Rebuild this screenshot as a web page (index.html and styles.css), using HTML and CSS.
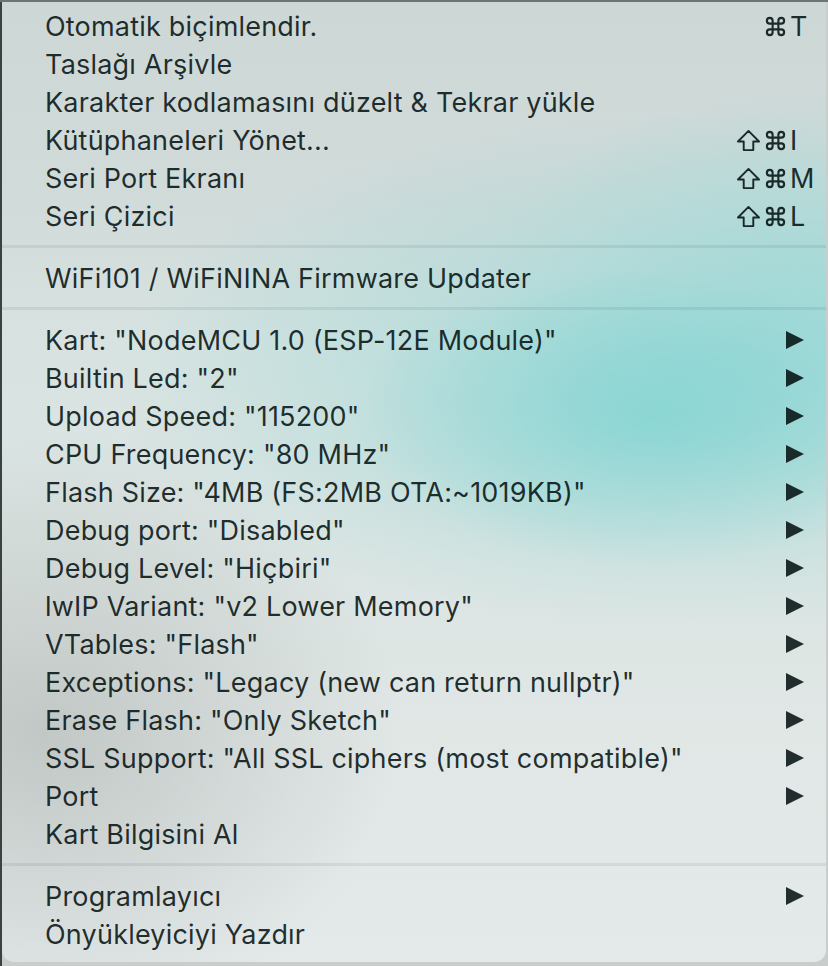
FILE: index.html
```html
<!DOCTYPE html>
<html lang="tr">
<head>
    <meta charset="UTF-8">
    <meta name="viewport" content="width=device-width, initial-scale=1.0">
    <link rel="stylesheet" href="styles.css">
    <title>Araçlar</title>
</head>
<body>
    <svg width="0" height="0" class="defs">
        <symbol id="cmd" viewBox="0 0 24 24">
            <path d="M15 6v12a3 3 0 1 0 3-3H6a3 3 0 1 0 3 3V6a3 3 0 1 0-3 3h12a3 3 0 1 0-3-3"/>
        </symbol>
        <symbol id="shift" viewBox="0 0 26 24">
            <path d="M13 2 L24 13 H18 V22 H8 V13 H2 Z"/>
        </symbol>
    </svg>

    <div class="menu">
        <div class="menu-item">
            <span class="label">Otomatik biçimlendir.</span>
            <span class="shortcut">
                <span class="mods"><svg class="cmd"><use href="#cmd"/></svg></span>
                <span class="key">T</span>
            </span>
        </div>
        <div class="menu-item"><span class="label">Taslağı Arşivle</span></div>
        <div class="menu-item"><span class="label">Karakter kodlamasını düzelt &amp; Tekrar yükle</span></div>
        <div class="menu-item">
            <span class="label">Kütüphaneleri Yönet...</span>
            <span class="shortcut">
                <span class="mods"><svg class="shift"><use href="#shift"/></svg><svg class="cmd"><use href="#cmd"/></svg></span>
                <span class="key">I</span>
            </span>
        </div>
        <div class="menu-item">
            <span class="label">Seri Port Ekranı</span>
            <span class="shortcut">
                <span class="mods"><svg class="shift"><use href="#shift"/></svg><svg class="cmd"><use href="#cmd"/></svg></span>
                <span class="key">M</span>
            </span>
        </div>
        <div class="menu-item">
            <span class="label">Seri Çizici</span>
            <span class="shortcut">
                <span class="mods"><svg class="shift"><use href="#shift"/></svg><svg class="cmd"><use href="#cmd"/></svg></span>
                <span class="key">L</span>
            </span>
        </div>

        <div class="separator"></div>

        <div class="menu-item"><span class="label">WiFi101 / WiFiNINA Firmware Updater</span></div>

        <div class="separator"></div>

        <div class="menu-item"><span class="label">Kart: "NodeMCU 1.0 (ESP-12E Module)"</span><span class="arrow"></span></div>
        <div class="menu-item"><span class="label">Builtin Led: "2"</span><span class="arrow"></span></div>
        <div class="menu-item"><span class="label">Upload Speed: "115200"</span><span class="arrow"></span></div>
        <div class="menu-item"><span class="label">CPU Frequency: "80 MHz"</span><span class="arrow"></span></div>
        <div class="menu-item"><span class="label">Flash Size: "4MB (FS:2MB OTA:~1019KB)"</span><span class="arrow"></span></div>
        <div class="menu-item"><span class="label">Debug port: "Disabled"</span><span class="arrow"></span></div>
        <div class="menu-item"><span class="label">Debug Level: "Hiçbiri"</span><span class="arrow"></span></div>
        <div class="menu-item"><span class="label">lwIP Variant: "v2 Lower Memory"</span><span class="arrow"></span></div>
        <div class="menu-item"><span class="label">VTables: "Flash"</span><span class="arrow"></span></div>
        <div class="menu-item"><span class="label">Exceptions: "Legacy (new can return nullptr)"</span><span class="arrow"></span></div>
        <div class="menu-item"><span class="label">Erase Flash: "Only Sketch"</span><span class="arrow"></span></div>
        <div class="menu-item"><span class="label">SSL Support: "All SSL ciphers (most compatible)"</span><span class="arrow"></span></div>
        <div class="menu-item"><span class="label">Port</span><span class="arrow"></span></div>
        <div class="menu-item"><span class="label">Kart Bilgisini Al</span></div>

        <div class="separator"></div>

        <div class="menu-item"><span class="label">Programlayıcı</span><span class="arrow"></span></div>
        <div class="menu-item"><span class="label">Önyükleyiciyi Yazdır</span></div>
    </div>
</body>
</html>
```

FILE: styles.css
```css
body {
    margin: 0;
    padding: 2px 2px 0 2px;
    font-family: Inter, "Noto Sans", sans-serif;
    background:
        linear-gradient(#6c7574 0 2px, transparent 2px),
        linear-gradient(to right, #3b4140 0 2px, transparent 2px),
        #c9cdcc;
    height: 966px;
    box-sizing: border-box;
    overflow: hidden;
}

.defs {
    position: absolute;
}

.menu {
    width: 824px;
    padding: 5px 0 9px 0;
    border-radius: 0 0 12px 12px;
    color: rgba(0, 12, 12, 0.86);
    background:
        radial-gradient(ellipse 300px 150px at 650px 415px, rgba(128, 212, 210, 0.75), rgba(128, 212, 210, 0) 100%),
        radial-gradient(ellipse 580px 260px at 690px 370px, rgba(142, 214, 212, 0.7), rgba(142, 214, 212, 0) 100%),
        radial-gradient(ellipse 340px 210px at 830px 290px, rgba(160, 218, 216, 0.65), rgba(160, 218, 216, 0) 100%),
        radial-gradient(ellipse 360px 300px at 40px 730px, rgba(190, 196, 194, 0.9), rgba(190, 196, 194, 0) 100%),
        linear-gradient(#cdd7d6 0, #d1dbda 200px, #d8e3e1 340px, #dce5e3 560px, #e2e8e7 820px, #e4eaea 100%);
}

.menu-item {
    display: flex;
    align-items: center;
    height: 38px;
    padding-left: 43px;
    font-size: 27px;
    letter-spacing: 0.2px;
}

.label {
    flex: 1;
    white-space: nowrap;
}

.shortcut {
    display: flex;
    align-items: center;
    margin-right: 8px;
}

.mods {
    display: flex;
    justify-content: flex-end;
    align-items: center;
    gap: 3px;
    width: 62px;
}

.mods svg {
    fill: none;
    stroke: rgba(0, 12, 12, 0.86);
    stroke-linejoin: round;
}

.cmd {
    width: 23px;
    height: 23px;
    stroke-width: 2.2;
}

.shift {
    width: 25px;
    height: 23px;
    stroke-width: 2;
}

.key {
    width: 28px;
    padding-left: 3px;
}

.arrow {
    width: 0;
    height: 0;
    margin-right: 22px;
    border-top: 9px solid transparent;
    border-bottom: 9px solid transparent;
    border-left: 18px solid rgba(0, 12, 12, 0.85);
}

.separator {
    height: 3px;
    margin: 10px 0 11px 0;
    background: rgba(0, 20, 20, 0.07);
}
```
